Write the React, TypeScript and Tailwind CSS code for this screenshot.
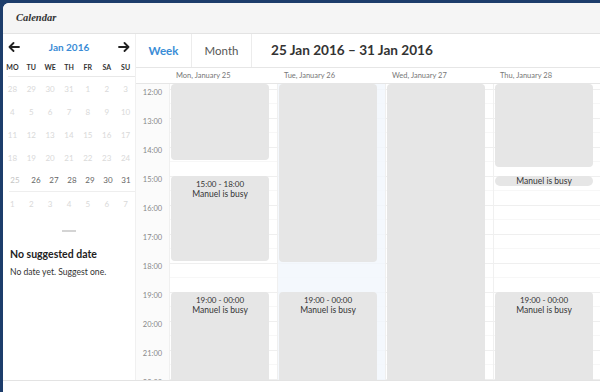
import React from "react";

const font = { fontFamily: "Lato, 'Open Sans', sans-serif" };

const weeks: { d: number; cur: boolean }[][] = [
  [28, 29, 30, 31, 1, 2, 3].map((d) => ({ d, cur: false })),
  [4, 5, 6, 7, 8, 9, 10].map((d) => ({ d, cur: false })),
  [11, 12, 13, 14, 15, 16, 17].map((d) => ({ d, cur: false })),
  [18, 19, 20, 21, 22, 23, 24].map((d) => ({ d, cur: false })),
  [25, 26, 27, 28, 29, 30, 31].map((d, i) => ({ d, cur: i > 0 })),
  [1, 2, 3, 4, 5, 6, 7].map((d) => ({ d, cur: false })),
];

const hours = [11, 12, 13, 14, 15, 16, 17, 18, 19, 20, 21, 22];

function Ev({ h, mt = 0, time, label }: { h: number; mt?: number; time?: string; label?: string }) {
  return (
    <div
      className="ml-[1px] mr-[8px] bg-[#e6e6e6] rounded-[4px] flex flex-col items-center pt-[3px] text-[#333] shrink-0"
      style={{ height: h, marginTop: mt }}
    >
      {time && <div className="text-[8px] leading-[10px]">{time}</div>}
      {label && <div className="text-[8.5px] leading-[10px]">{label}</div>}
    </div>
  );
}

export default function App() {
  return (
    <div className="w-[600px] h-[392px] bg-[#1d3d6b] pl-[3px] pt-[3px] overflow-hidden" style={font}>
      <div className="w-full h-full bg-white rounded-tl-[6px] flex flex-col overflow-hidden">
        {/* title bar */}
        <div className="h-[31px] shrink-0 bg-[#f5f5f5] border-b border-[#e3e3e3] flex items-center pl-[13px]">
          <span
            className="text-[10.5px] font-bold italic text-[#333]"
            style={{ fontFamily: "'Liberation Serif', serif" }}
          >
            Calendar
          </span>
        </div>

        {/* content */}
        <div className="h-[346px] shrink-0 flex">
          {/* sidebar */}
          <div className="w-[132px] shrink-0 flex flex-col">
            <div className="h-[24px] mt-[1px] flex items-center justify-between px-[5px]">
              <svg width="12" height="10" viewBox="0 0 12 10" fill="none" stroke="#222" strokeWidth="1.8" strokeLinecap="round" strokeLinejoin="round">
                <path d="M11 5H1.5M5.5 1L1.5 5l4 4" />
              </svg>
              <span className="text-[10px] font-bold text-[#3a8cd6]">Jan 2016</span>
              <svg width="12" height="10" viewBox="0 0 12 10" fill="none" stroke="#222" strokeWidth="1.8" strokeLinecap="round" strokeLinejoin="round">
                <path d="M1 5h9.5M6.5 1l4 4-4 4" />
              </svg>
            </div>
            <div className="h-[17px] grid grid-cols-7 items-center">
              {["MO", "TU", "WE", "TH", "FR", "SA", "SU"].map((w) => (
                <div key={w} className="text-center text-[7px] font-bold text-[#333]">
                  {w}
                </div>
              ))}
            </div>
            <div className="ml-[5px] border-t border-[#e8e8e8]" />
            {weeks.map((row, ri) => (
              <div
                key={ri}
                className={`h-[23px] grid grid-cols-7 items-center ${ri === 4 ? "border-b border-[#eeeeee] ml-[6px]" : ""}`}
              >
                {row.map((c, ci) => (
                  <div
                    key={ci}
                    className={`text-center text-[8px] ${c.cur ? "text-[#666]" : ri === 4 ? "text-[#c4c4c4]" : "text-[#d9d9d9]"} ${ri === 4 && ci === 0 ? "-ml-[6px]" : ""}`}
                  >
                    {c.d}
                  </div>
                ))}
              </div>
            ))}
            <div className="flex justify-center mt-[15px]">
              <div className="w-[14px] h-[2px] bg-[#d4d4d4]" />
            </div>
            <div className="pl-[7px] mt-[15px] text-[10.5px] font-bold text-[#222]">No suggested date</div>
            <div className="pl-[7px] mt-[3px] text-[8.6px] text-[#333]">No date yet. Suggest one.</div>
          </div>

          {/* main */}
          <div className="flex-1 flex flex-col border-l border-[#f0f0f0]">
            <div className="h-[34px] shrink-0 border-b border-[#e6e6e6] flex items-stretch">
              <div className="w-[56px] border-r border-[#ececec] flex items-center justify-center text-[11.5px] font-bold text-[#3a8cd6]">
                Week
              </div>
              <div className="w-[60px] border-r border-[#ececec] flex items-center justify-center text-[11.5px] text-[#555]">
                Month
              </div>
              <div className="flex items-center pl-[19px] text-[13.6px] font-bold text-[#333]">
                25 Jan 2016 – 31 Jan 2016
              </div>
            </div>
            <div className="h-[16px] shrink-0 border-b border-[#e6e6e6] flex">
              <div className="w-[33px]" />
              {["Mon, January 25", "Tue, January 26", "Wed, January 27", "Thu, January 28"].map((d) => (
                <div key={d} className="w-[108px] pl-[7px] flex items-center text-[7.5px] text-[#777]">
                  {d}
                </div>
              ))}
            </div>
            {/* grid */}
            <div className="relative h-[296px] overflow-hidden">
              <div className="flex flex-col -mt-[24px]">
                {hours.map((h) => (
                  <div key={h} className="h-[29px] flex">
                    <div className="w-[33px] bg-[#fbfbfb] flex justify-center">
                      {h > 11 && (
                        <span className="text-[7.5px] leading-[10px] text-[#888] mt-[-1px]">{h}:00</span>
                      )}
                    </div>
                    <div className="flex-1 border-t border-[#efefef] flex flex-col">
                      <div className="h-[14px] border-b border-[#f7f7f7]" />
                    </div>
                  </div>
                ))}
              </div>
              <div className="absolute top-0 bottom-0 left-[33px] right-0 flex">
                <div className="w-[108px] flex flex-col border-l border-[#f0f0f0]">
                  <Ev h={76} />
                  <Ev h={85} mt={16} time="15:00 - 18:00" label="Manuel is busy" />
                  <Ev h={110} mt={31} time="19:00 - 00:00" label="Manuel is busy" />
                </div>
                <div className="w-[108px] flex flex-col border-l border-[#f0f0f0] bg-[#f1f6fc]/80">
                  <Ev h={178} />
                  <Ev h={110} mt={30} time="19:00 - 00:00" label="Manuel is busy" />
                </div>
                <div className="w-[108px] flex flex-col border-l border-[#f0f0f0]">
                  <Ev h={300} />
                </div>
                <div className="w-[108px] flex flex-col border-l border-[#f0f0f0]">
                  <Ev h={83} />
                  <div className="ml-[1px] mr-[8px] mt-[9px] h-[10px] rounded-full bg-[#e6e6e6] flex items-center justify-center text-[8.5px] text-[#333] leading-[10px]">
                    Manuel is busy
                  </div>
                  <Ev h={110} mt={106} time="19:00 - 00:00" label="Manuel is busy" />
                </div>
              </div>
            </div>
          </div>
        </div>

        {/* footer */}
        <div className="flex-1 border-t border-[#e3e3e3] bg-white" />
      </div>
    </div>
  );
}
